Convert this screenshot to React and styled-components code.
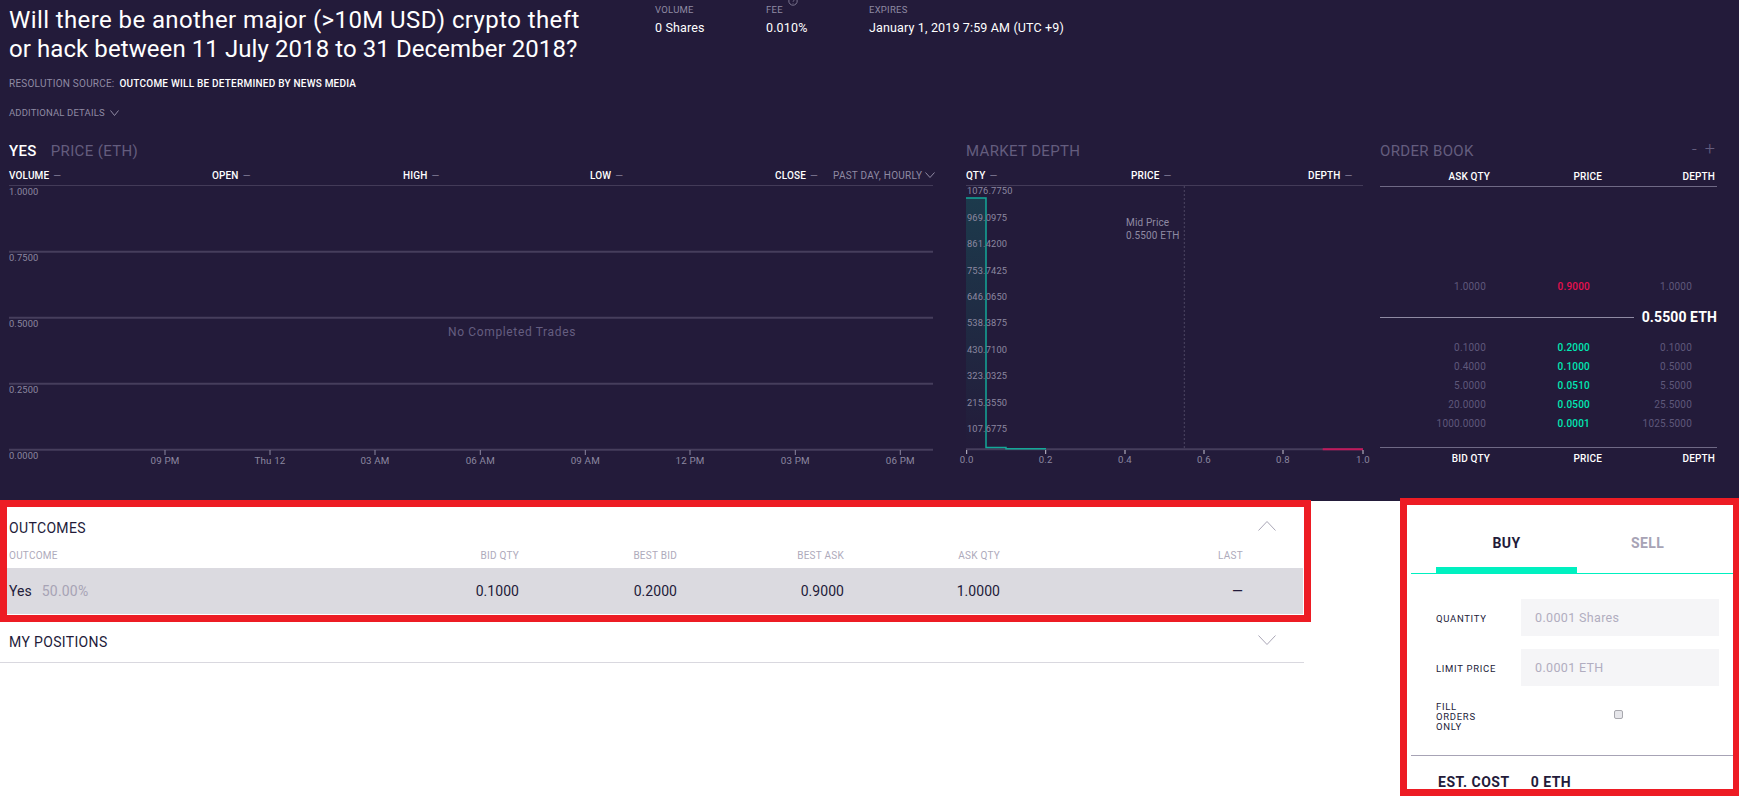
import React from "react";
import styled, { createGlobalStyle } from "styled-components";

const Global = createGlobalStyle`
  html, body { margin: 0; padding: 0; background: #fff; overflow: hidden; }
  * { box-sizing: border-box; }
  body { font-family: Roboto, "Liberation Sans", sans-serif; }
`;

const Page = styled.div`
  width: 1739px;
  height: 796px;
  overflow: hidden;
  background: #fff;
`;
const Hero = styled.section`
  height: 501px;
  background: #231b3a;
  padding-left: 9px;
  color: #fff;
`;
const Top = styled.header`
  display: flex;
  height: 139px;
`;
const Intro = styled.div`
  width: 646px;
`;
const Title = styled.h1`
  margin: 6px 0 0;
  font-size: 24px;
  font-weight: 400;
  line-height: 28.6px;
  color: #fff;
`;
const TitleLine = styled.span`
  display: block;
  white-space: nowrap;
  letter-spacing: ${(p) => p.$ls}px;
`;
const Source = styled.div`
  margin-top: 14px;
  height: 14px;
  line-height: 14px;
  font-size: 10px;
  letter-spacing: 0.22px;
  color: #8f8aa3;
  display: flex;
  gap: 5px;
`;
const SourceValue = styled.span`
  color: #fff;
  font-weight: 500;
`;
const Details = styled.div`
  margin-top: 15px;
  height: 14px;
  line-height: 14px;
  font-size: 9.5px;
  letter-spacing: 0.15px;
  color: #8f8aa3;
  display: flex;
  align-items: center;
  gap: 5px;
`;
const Stats = styled.div`
  display: flex;
`;
const Stat = styled.div`
  width: ${(p) => p.$w}px;
  padding-top: 3px;
`;
const StatLabel = styled.div`
  position: relative;
  height: 14px;
  line-height: 14px;
  font-size: 9.5px;
  letter-spacing: 0.25px;
  color: #8f8aa3;
  display: flex;
  gap: 5px;
`;
const InfoMark = styled.svg`
  margin-top: -7px;
`;
const StatValue = styled.div`
  margin-top: 4px;
  height: 14px;
  line-height: 14px;
  font-size: 12.5px;
  letter-spacing: 0.15px;
  color: #fff;
`;
const Charts = styled.div`
  display: flex;
`;
const Panel = styled.div`
  width: ${(p) => p.$w}px;
  margin-left: ${(p) => p.$ml || 0}px;
`;
const HeadingRow = styled.div`
  height: 24px;
  line-height: 24px;
  display: flex;
  align-items: center;
  gap: 14px;
`;
const Heading = styled.span`
  font-size: 15px;
  letter-spacing: 0.35px;
  font-weight: ${(p) => (p.$on ? 500 : 400)};
  color: ${(p) => (p.$on ? "#fff" : "#645d7e")};
`;
const Zoomer = styled.div`
  margin-left: auto;
  margin-right: 2px;
  margin-top: -5px;
  display: flex;
  gap: 8px;
  font-size: 18px;
  font-weight: 300;
  color: #645d7e;
`;
const Columns = styled.div`
  display: grid;
  grid-template-columns: ${(p) => p.$cols};
  height: 23px;
  align-items: center;
  padding-top: 2px;
  font-size: 10px;
  font-weight: 500;
  letter-spacing: 0.15px;
  color: #fff;
  border-bottom: 1px solid #433b58;
`;
const Dash = styled.span`
  margin-left: 4px;
  font-weight: 400;
  color: #7d7792;
`;
const Range = styled.span`
  display: flex;
  align-items: center;
  gap: 3px;
  font-weight: 400;
  letter-spacing: 0.25px;
  color: #8f8aa3;
  white-space: nowrap;
`;
const ChartSvg = styled.svg`
  display: block;
  overflow: visible;
`;
const AxisText = styled.text`
  font-family: Roboto, "Liberation Sans", sans-serif;
  font-size: ${(p) => p.$size || 9.3}px;
  letter-spacing: ${(p) => p.$ls || 0.15}px;
  fill: ${(p) => p.$fill || "#8c88a0"};
`;
const BookColumns = styled.div`
  display: grid;
  grid-template-columns: 110px 112px 113px;
  align-items: center;
  text-align: right;
  font-size: 10px;
  font-weight: 500;
  letter-spacing: 0.15px;
  color: #fff;
  ${(p) =>
    p.$foot
      ? "height: 22px; border-top: 1px solid #6f6985; margin-top: 14px;"
      : "height: 24px; padding-top: 3px; border-bottom: 1px solid #6f6985;"}
`;
const Asks = styled.div`
  height: 109px;
  display: flex;
  flex-direction: column;
  justify-content: flex-end;
`;
const BookRow = styled.div`
  display: grid;
  grid-template-columns: 106px 104px 102px;
  height: 19px;
  align-items: center;
  text-align: right;
  font-size: 10px;
  letter-spacing: 0.2px;
  color: #5f587a;
`;
const BookPrice = styled.span`
  font-weight: 500;
  color: ${(p) => (p.$ask ? "#e8104f" : "#00e8b4")};
`;
const MidRow = styled.div`
  height: 42px;
  display: flex;
  align-items: center;
  gap: 8px;
`;
const MidLine = styled.div`
  flex: 1;
  height: 1px;
  background: #8f8aa3;
`;
const MidValue = styled.span`
  font-size: 14px;
  font-weight: 700;
  letter-spacing: 0.1px;
  color: #fff;
`;
const Lower = styled.div`
  display: flex;
  align-items: flex-start;
`;
const Left = styled.div`
  width: 1311px;
  margin-top: -1px;
`;
const OutcomesCard = styled.section`
  height: 122px;
  border: 7px solid #ed1c24;
`;
const SectionHead = styled.div`
  display: flex;
  justify-content: space-between;
  align-items: center;
  height: ${(p) => p.$h}px;
  padding: 0 ${(p) => p.$pr}px 0 ${(p) => p.$pl}px;
`;
const SectionTitle = styled.h2`
  margin: 0;
  font-size: 14px;
  font-weight: 400;
  letter-spacing: 0.35px;
  color: #231b3a;
`;
const ChevronSlot = styled.span`
  display: flex;
  margin-bottom: ${(p) => p.$mb}px;
`;
const columns = "300px 210px 158px 167px 156px 243px";
const TableHead = styled.div`
  display: grid;
  grid-template-columns: ${columns};
  height: 19px;
  padding-left: 2px;
  padding-bottom: 6px;
  align-items: center;
  text-align: right;
  font-size: 10px;
  letter-spacing: 0.25px;
  color: #aeaabb;
`;
const HeadLeft = styled.span`
  text-align: left;
`;
const TableRow = styled.div`
  display: grid;
  grid-template-columns: ${columns};
  height: 46px;
  width: 1296px;
  padding-left: 2px;
  align-items: center;
  text-align: right;
  background: #dbdae0;
  font-size: 14px;
  letter-spacing: 0.05px;
  color: #231b3a;
`;
const OutcomeName = styled.span`
  text-align: left;
  display: flex;
  gap: 10px;
`;
const OutcomeShare = styled.span`
  color: #a7a3b5;
  letter-spacing: 0.2px;
`;
const PositionsBar = styled.section`
  width: 1304px;
  height: 41px;
  border-bottom: 1px solid #d9d8df;
`;
const Ticket = styled.aside`
  width: 339px;
  height: 298px;
  margin-left: 89px;
  margin-top: -3px;
  border: 7px solid #ed1c24;
  border-right-width: 6px;
  background: #fff;
  overflow: hidden;
  position: relative;
`;
const Tabs = styled.div`
  margin-left: 4px;
  height: 69px;
  padding-left: 25px;
  display: flex;
  border-bottom: 1px solid #00f0c0;
`;
const Tab = styled.div`
  width: 141px;
  height: 68px;
  padding-top: 27px;
  text-align: center;
  font-size: 14px;
  line-height: 22px;
  font-weight: 700;
  letter-spacing: 0.4px;
  color: ${(p) => (p.$on ? "#231b3a" : "#a7a3b5")};
  border-bottom: 6px solid ${(p) => (p.$on ? "#00f0c0" : "transparent")};
`;
const Form = styled.div`
  padding: 25px 0 0 29px;
`;
const FormRow = styled.label`
  display: flex;
  align-items: center;
  width: 283px;
  margin-bottom: ${(p) => p.$mb ?? 13}px;
`;
const FieldLabel = styled.span`
  width: 85px;
  flex: none;
  font-size: 9.5px;
  line-height: 10px;
  letter-spacing: 0.7px;
  color: #231b3a;
  padding-top: 3px;
`;
const Field = styled.div`
  flex: 1;
  height: 37px;
  padding-left: 14px;
  line-height: 38px;
  background: #f5f5f7;
  font-size: 12.5px;
  letter-spacing: 0.35px;
  color: #b1adc0;
`;
const CheckCell = styled.div`
  flex: 1;
  display: flex;
  justify-content: center;
  padding-bottom: 3px;
  padding-right: 3px;
`;
const Check = styled.input`
  appearance: none;
  margin: 0;
  width: 9px;
  height: 9px;
  border: 1px solid #a8a8ae;
  border-radius: 2px;
  background: #e6e6ea;
`;
const Rule = styled.div`
  margin-left: 4px;
  margin-top: 23px;
  height: 1px;
  background: #a7a3b5;
`;
const Cost = styled.div`
  margin: 17px 0 0 31px;
  display: flex;
  gap: 21px;
  font-size: 14px;
  line-height: 18px;
  font-weight: 700;
  letter-spacing: 0.5px;
  color: #231b3a;
`;

const Chevron = ({ up, w = 18, h = 9, color = "#a9a6b6" }) => (
  <svg width={w} height={h + 1} viewBox={`0 0 ${w} ${h + 1}`} fill="none">
    <polyline
      points={up ? `0.5,${h + 0.5} ${w / 2},0.5 ${w - 0.5},${h + 0.5}` : `0.5,0.5 ${w / 2},${h + 0.5} ${w - 0.5},0.5`}
      stroke={color}
      strokeWidth="1"
    />
  </svg>
);

const priceY = [
  ["1.0000", 5],
  ["0.7500", 71],
  ["0.5000", 137],
  ["0.2500", 203],
  ["0.0000", 269],
];
const priceX = [
  ["09 PM", 156],
  ["Thu 12", 261],
  ["03 AM", 366],
  ["06 AM", 471.3],
  ["09 AM", 576.3],
  ["12 PM", 681],
  ["03 PM", 786.3],
  ["06 PM", 891.3],
];
const PriceChart = () => (
  <ChartSvg width="924" height="284" viewBox="0 0 924 284">
    {[65.7, 131.7, 197.7, 263.7].map((y) => (
      <line key={y} x1="0" x2="924" y1={y} y2={y} stroke="#463e5c" strokeWidth="2" />
    ))}
    {priceY.map(([t, y]) => (
      <AxisText key={t} x="0" y={y + 3.5}>{t}</AxisText>
    ))}
    {priceX.map(([t, x]) => (
      <g key={t}>
        <line x1={x} x2={x} y1="264" y2="269" stroke="#8c88a0" />
        <AxisText x={x} y="277.5" textAnchor="middle" $size={9.8}>{t}</AxisText>
      </g>
    ))}
    <AxisText x="503" y="149.8" textAnchor="middle" $size={12} $ls={0.65} $fill="#655e80">
      No Completed Trades
    </AxisText>
  </ChartSvg>
);

const depthY = [
  ["1076.7750", 4],
  ["969.0975", 31],
  ["861.4200", 57],
  ["753.7425", 84],
  ["646.0650", 110],
  ["538.3875", 136],
  ["430.7100", 163],
  ["323.0325", 189],
  ["215.3550", 216],
  ["107.6775", 242],
];
const depthX = [
  ["0.0", 0.7],
  ["0.2", 79.7],
  ["0.4", 159],
  ["0.6", 238],
  ["0.8", 317],
  ["1.0", 397],
];
const DepthChart = () => (
  <ChartSvg width="397" height="284" viewBox="0 0 397 284">
    <defs>
      <linearGradient id="bidFill" x1="0" x2="0" y1="0" y2="1">
        <stop offset="0" stopColor="#1c3a4c" />
        <stop offset="1" stopColor="#231b3a" />
      </linearGradient>
    </defs>
    <rect x="0" y="12" width="20" height="251" fill="url(#bidFill)" />
    <line x1="218.3" x2="218.3" y1="0" y2="263" stroke="#4d4663" strokeDasharray="2 2" />
    <line x1="0" x2="397" y1="263.3" y2="263.3" stroke="#463e5c" strokeWidth="2" />
    <polyline
      points="0,12 20,12 20,261.5 40,261.5 40,262.7 80,262.7"
      fill="none"
      stroke="#13a898"
      strokeWidth="1.5"
    />
    <line x1="356.7" x2="397" y1="263.3" y2="263.3" stroke="#c2185b" strokeWidth="2" />
    {depthX.map(([t, x]) => (
      <g key={t}>
        <line x1={x} x2={x} y1="264" y2="268" stroke="#c9c6d2" />
        <AxisText x={x} y="276.5" textAnchor="middle" $size={9.6}>{t}</AxisText>
      </g>
    ))}
    {depthY.map(([t, y]) => (
      <AxisText key={t} x="1" y={y + 3.5}>{t}</AxisText>
    ))}
    <AxisText x="160" y="39.5" $size={10} $fill="#8f8aa3">Mid Price</AxisText>
    <AxisText x="160" y="52.7" $size={10} $fill="#8f8aa3">0.5500 ETH</AxisText>
  </ChartSvg>
);

const bids = [
  ["0.1000", "0.2000", "0.1000"],
  ["0.4000", "0.1000", "0.5000"],
  ["5.0000", "0.0510", "5.5000"],
  ["20.0000", "0.0500", "25.5000"],
  ["1000.0000", "0.0001", "1025.5000"],
];

export default function App() {
  return (
    <Page>
      <Global />
      <Hero>
        <Top>
          <Intro>
            <Title>
              <TitleLine $ls={0.4}>Will there be another major (&gt;10M USD) crypto theft</TitleLine>
              <TitleLine $ls={0.08}>or hack between 11 July 2018 to 31 December 2018?</TitleLine>
            </Title>
            <Source>
              RESOLUTION SOURCE:
              <SourceValue>OUTCOME WILL BE DETERMINED BY NEWS MEDIA</SourceValue>
            </Source>
            <Details>
              ADDITIONAL DETAILS
              <Chevron w={9} h={5} color="#8f8aa3" />
            </Details>
          </Intro>
          <Stats>
            <Stat $w={111}>
              <StatLabel>VOLUME</StatLabel>
              <StatValue>0 Shares</StatValue>
            </Stat>
            <Stat $w={103}>
              <StatLabel>
                FEE
                <InfoMark width="10" height="10" viewBox="0 0 10 10" fill="none">
                  <circle cx="5" cy="5" r="4.2" stroke="#8f8aa3" strokeWidth="0.8" />
                  <path d="M3.8 4c0-1.5 2.4-1.5 2.4 0 0 .8-1.2.9-1.2 1.8M5 7v.6" stroke="#8f8aa3" strokeWidth="0.7" />
                </InfoMark>
              </StatLabel>
              <StatValue>0.010%</StatValue>
            </Stat>
            <Stat $w={250}>
              <StatLabel>EXPIRES</StatLabel>
              <StatValue>January 1, 2019 7:59 AM (UTC +9)</StatValue>
            </Stat>
          </Stats>
        </Top>
        <Charts>
          <Panel $w={924}>
            <HeadingRow>
              <Heading $on>YES</Heading>
              <Heading>PRICE (ETH)</Heading>
            </HeadingRow>
            <Columns $cols="203px 191px 187px 185px 58px 1fr">
              <span>VOLUME<Dash>—</Dash></span>
              <span>OPEN<Dash>—</Dash></span>
              <span>HIGH<Dash>—</Dash></span>
              <span>LOW<Dash>—</Dash></span>
              <span>CLOSE<Dash>—</Dash></span>
              <Range>PAST DAY, HOURLY <Chevron w={10} h={5} color="#8f8aa3" /></Range>
            </Columns>
            <PriceChart />
          </Panel>
          <Panel $w={397} $ml={33}>
            <HeadingRow>
              <Heading>MARKET DEPTH</Heading>
            </HeadingRow>
            <Columns $cols="165px 177px 1fr">
              <span>QTY<Dash>—</Dash></span>
              <span>PRICE<Dash>—</Dash></span>
              <span>DEPTH<Dash>—</Dash></span>
            </Columns>
            <DepthChart />
          </Panel>
          <Panel $w={337} $ml={17}>
            <HeadingRow>
              <Heading>ORDER BOOK</Heading>
              <Zoomer><span>-</span><span>+</span></Zoomer>
            </HeadingRow>
            <BookColumns>
              <span>ASK QTY</span>
              <span>PRICE</span>
              <span>DEPTH</span>
            </BookColumns>
            <Asks>
              <BookRow>
                <span>1.0000</span>
                <BookPrice $ask>0.9000</BookPrice>
                <span>1.0000</span>
              </BookRow>
            </Asks>
            <MidRow>
              <MidLine />
              <MidValue>0.5500 ETH</MidValue>
            </MidRow>
            {bids.map(([q, p, d]) => (
              <BookRow key={p}>
                <span>{q}</span>
                <BookPrice>{p}</BookPrice>
                <span>{d}</span>
              </BookRow>
            ))}
            <BookColumns $foot>
              <span>BID QTY</span>
              <span>PRICE</span>
              <span>DEPTH</span>
            </BookColumns>
          </Panel>
        </Charts>
      </Hero>
      <Lower>
        <Left>
          <OutcomesCard>
            <SectionHead $h={42} $pl={2} $pr={28}>
              <SectionTitle>OUTCOMES</SectionTitle>
              <ChevronSlot $mb={4}><Chevron up /></ChevronSlot>
            </SectionHead>
            <TableHead>
              <HeadLeft>OUTCOME</HeadLeft>
              <span>BID QTY</span>
              <span>BEST BID</span>
              <span>BEST ASK</span>
              <span>ASK QTY</span>
              <span>LAST</span>
            </TableHead>
            <TableRow>
              <OutcomeName>
                Yes <OutcomeShare>50.00%</OutcomeShare>
              </OutcomeName>
              <span>0.1000</span>
              <span>0.2000</span>
              <span>0.9000</span>
              <span>1.0000</span>
              <span>—</span>
            </TableRow>
          </OutcomesCard>
          <PositionsBar>
            <SectionHead $h={39} $pl={9} $pr={28}>
              <SectionTitle>MY POSITIONS</SectionTitle>
              <ChevronSlot $mb={3}><Chevron /></ChevronSlot>
            </SectionHead>
          </PositionsBar>
        </Left>
        <Ticket>
          <Tabs>
            <Tab $on>BUY</Tab>
            <Tab>SELL</Tab>
          </Tabs>
          <Form>
            <FormRow>
              <FieldLabel>QUANTITY</FieldLabel>
              <Field>0.0001 Shares</Field>
            </FormRow>
            <FormRow>
              <FieldLabel>LIMIT PRICE</FieldLabel>
              <Field>0.0001 ETH</Field>
            </FormRow>
            <FormRow $mb={0}>
              <FieldLabel>FILL<br />ORDERS<br />ONLY</FieldLabel>
              <CheckCell><Check type="checkbox" /></CheckCell>
            </FormRow>
          </Form>
          <Rule />
          <Cost>
            <span>EST. COST</span>
            <span>0 ETH</span>
          </Cost>
        </Ticket>
      </Lower>
    </Page>
  );
}
